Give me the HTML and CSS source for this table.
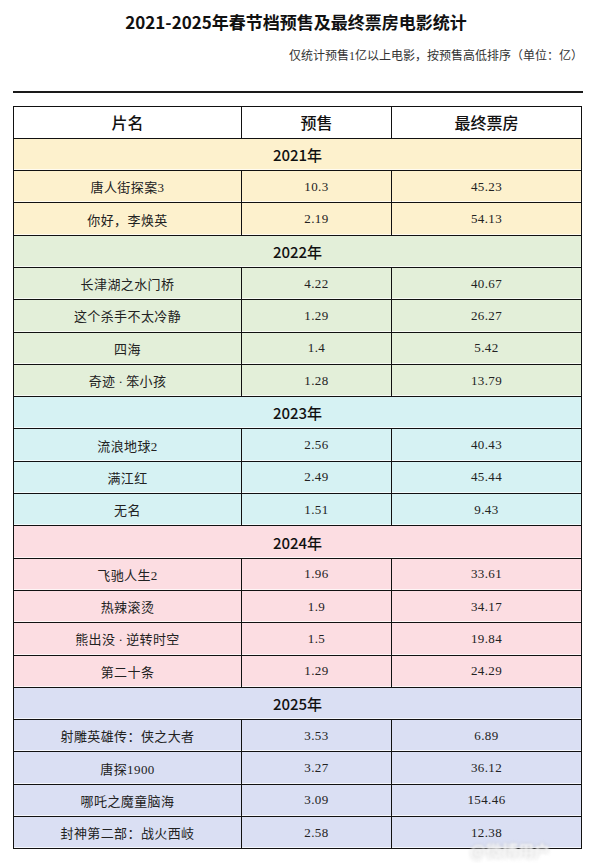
FILE: index.html
```html
<!DOCTYPE html>
<html lang="zh-CN">
<head>
<meta charset="utf-8">
<title>2021-2025年春节档预售及最终票房电影统计</title>
<link rel="stylesheet" href="styles.css">
</head>
<body>
<div class="page">
  <h1 class="title">2021-2025年春节档预售及最终票房电影统计</h1>
  <p class="note">仅统计预售1亿以上电影，按预售高低排序（单位：亿）</p>
  <div class="rule"></div>
  <table class="stats">
    <colgroup><col class="c1"><col class="c2"><col class="c3"></colgroup>
    <thead>
      <tr><th>片名</th><th>预售</th><th>最终票房</th></tr>
    </thead>
    <tbody class="y2021">
      <tr class="year"><td colspan="3">2021年</td></tr>
      <tr><td>唐人街探案3</td><td>10.3</td><td>45.23</td></tr>
      <tr><td>你好，李焕英</td><td>2.19</td><td>54.13</td></tr>
    </tbody>
    <tbody class="y2022">
      <tr class="year"><td colspan="3">2022年</td></tr>
      <tr><td>长津湖之水门桥</td><td>4.22</td><td>40.67</td></tr>
      <tr><td>这个杀手不太冷静</td><td>1.29</td><td>26.27</td></tr>
      <tr><td>四海</td><td>1.4</td><td>5.42</td></tr>
      <tr><td>奇迹<span class="dot">·</span>笨小孩</td><td>1.28</td><td>13.79</td></tr>
    </tbody>
    <tbody class="y2023">
      <tr class="year"><td colspan="3">2023年</td></tr>
      <tr><td>流浪地球2</td><td>2.56</td><td>40.43</td></tr>
      <tr><td>满江红</td><td>2.49</td><td>45.44</td></tr>
      <tr><td>无名</td><td>1.51</td><td>9.43</td></tr>
    </tbody>
    <tbody class="y2024">
      <tr class="year"><td colspan="3">2024年</td></tr>
      <tr><td>飞驰人生2</td><td>1.96</td><td>33.61</td></tr>
      <tr><td>热辣滚烫</td><td>1.9</td><td>34.17</td></tr>
      <tr><td>熊出没<span class="dot">·</span>逆转时空</td><td>1.5</td><td>19.84</td></tr>
      <tr><td>第二十条</td><td>1.29</td><td>24.29</td></tr>
    </tbody>
    <tbody class="y2025">
      <tr class="year"><td colspan="3">2025年</td></tr>
      <tr><td>射雕英雄传：侠之大者</td><td>3.53</td><td>6.89</td></tr>
      <tr><td>唐探1900</td><td>3.27</td><td>36.12</td></tr>
      <tr><td>哪吒之魔童脑海</td><td>3.09</td><td>154.46</td></tr>
      <tr><td>封神第二部：战火西岐</td><td>2.58</td><td>12.38</td></tr>
    </tbody>
  </table>
  <div class="watermark">@微博用户</div>
</div>
</body>
</html>
```

FILE: styles.css
```css
html, body {
  margin: 0;
  padding: 0;
  background: #ffffff;
}

.page {
  position: relative;
  width: 600px;
  height: 863px;
  overflow: hidden;
  padding-top: 10px;
  box-sizing: border-box;
}

.title {
  margin: 0 0 0 -8px;
  text-align: center;
  font-family: "Noto Sans CJK SC", sans-serif;
  font-size: 17px;
  font-weight: 700;
  line-height: 24px;
  color: #111;
}

.note {
  margin: 14px 17px 0 0;
  text-align: right;
  font-family: "Liberation Serif", "Noto Sans CJK SC", serif;
  font-size: 12px;
  line-height: 16px;
  color: #333;
}

.rule {
  margin: 27px 17px 0 13px;
  height: 1.5px;
  background: #1a1a1a;
}

.stats {
  margin: 13px 0 0 13px;
  width: 568px;
  border-collapse: collapse;
  table-layout: fixed;
  border: 1.5px solid #111;
}

.c1 { width: 228px; }
.c2 { width: 150px; }
.c3 { width: 190px; }

.stats th,
.stats td {
  border: 1px solid #111;
  height: 32.3px;
  padding: 0;
  text-align: center;
  vertical-align: middle;
  box-sizing: border-box;
}

.stats th {
  background: #ffffff;
  font-family: "Noto Sans CJK SC", sans-serif;
  font-size: 16px;
  font-weight: 500;
  color: #111;
}

.stats td {
  font-family: "Liberation Serif", "Noto Sans CJK SC", serif;
  font-size: 13px;
  letter-spacing: 0.4px;
  color: #222;
  box-shadow: inset 0 -1px 0 rgba(255, 255, 255, 0.7);
}

.stats .dot {
  padding: 0 3px;
}

.stats .year td {
  font-family: "Noto Sans CJK SC", sans-serif;
  font-size: 15px;
  font-weight: 500;
  letter-spacing: 0;
  color: #111;
}

.y2021 td { background: #fdf1cd; }
.y2022 td { background: #e3efd9; }
.y2023 td { background: #d6f2f3; }
.y2024 td { background: #fcdde2; }
.y2025 td { background: #dadff3; }

.watermark {
  position: absolute;
  left: 470px;
  top: 838px;
  font-family: "Noto Sans CJK SC", sans-serif;
  font-size: 16px;
  font-weight: 700;
  color: rgba(255, 255, 255, 0.85);
  text-shadow: 0 0 3px rgba(160, 160, 160, 0.6);
  filter: blur(1px);
}
```
